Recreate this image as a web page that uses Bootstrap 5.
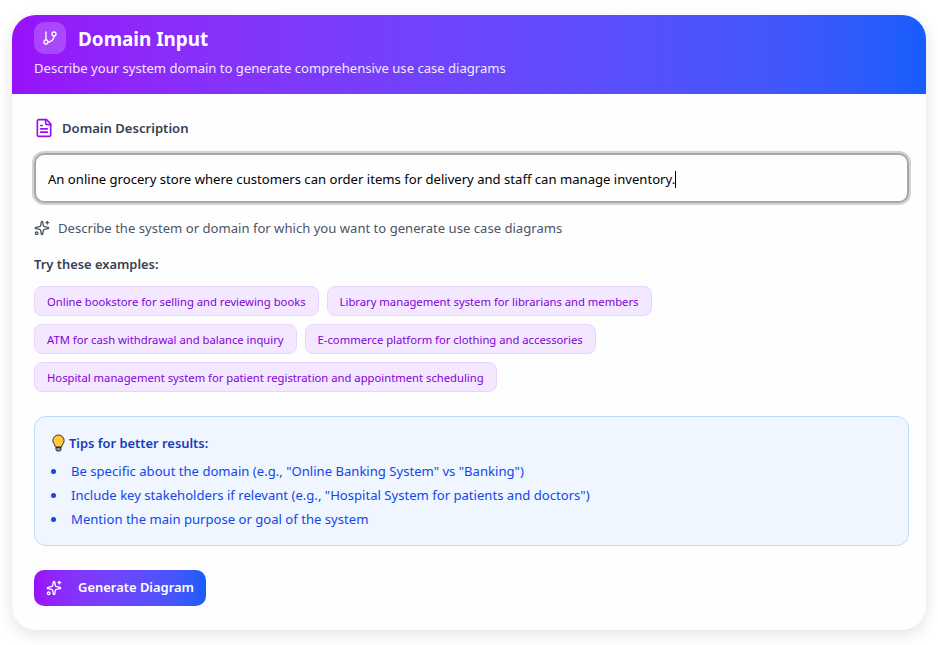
<!DOCTYPE html>
<html lang="en">
<head>
<meta charset="utf-8">
<title>Domain Input</title>
<link href="https://cdn.jsdelivr.net/npm/bootstrap@5.3.0/dist/css/bootstrap.min.css" rel="stylesheet">
<style>
html,body{height:100%}
body{background:#fff;font-family:"Noto Sans","Open Sans",sans-serif;overflow:hidden;padding:15px 12px}
.panel-main{border:0;border-radius:24px;overflow:hidden;box-shadow:0 4px 16px rgba(0,0,0,.12);height:615px;background:#fefeff}
.panel-head{background:linear-gradient(90deg in oklab,#9810fa,#155dfc);color:#fff;height:79px;padding:7px 22px 0;border-radius:0}
.head-icon{width:32px;height:32px;border-radius:10px;background:rgba(255,255,255,.2)}
.head-title{font-size:18.9px;font-weight:700;line-height:34px;margin:0}
.head-sub{font-size:13.08px;line-height:20px;margin:2px 0 0;color:#f3e8ff}
.panel-body{padding:0 17px 0 22px}
.label-row{height:20px;margin-top:24px;color:#364153;font-size:13.08px;font-weight:600}
.label-text{padding-top:2px}
.domain-box{height:50px;margin-top:15px;border:2px solid #a6a6a6;border-radius:10px;box-shadow:0 0 0 2px #d2d2d2;font-size:13.1px;color:#000;padding:3px 12px 0;display:flex;align-items:center;white-space:nowrap;background:transparent}
.caret-bar{display:inline-block;width:1px;height:17px;background:#000}
.hint-row{margin-top:15px;height:20px;color:#4a5565;font-size:13.1px}
.hint-text{padding-top:2px}
.try-title{margin-top:17px;height:18px;line-height:18px;color:#364153;font-size:12.9px;font-weight:600}
.chip-wrap{margin-top:13px;row-gap:8px;column-gap:8px}
.chip-btn{height:30px;border:1px solid #e9d4ff;border-radius:8px;background:#f3e8ff;color:#8200db;font-size:11.25px;padding:0 12px;line-height:29px}
.tips-box{margin-top:24px;height:130px;border:1px solid #bedbff;border-radius:12px;background:#eff6ff;padding:16px 16px 0}
.tips-title{font-size:12.9px;font-weight:600;color:#193cb8;line-height:20px;gap:3px}
.tips-list{margin:6px 0 0;padding:0;list-style:none;font-size:13.1px;color:#1447e6;line-height:24px}
.tips-list li{display:flex;align-items:center;gap:15px}
.tips-list li::before{content:"";width:5px;height:5px;border-radius:50%;background:#1447e6;flex:none}
.go-btn{margin-top:24px;height:36px;border:0;border-radius:10px;background:linear-gradient(90deg in oklab,#9810fa,#155dfc);color:#fff;font-size:12.95px;font-weight:600;padding:0 12px;gap:16px}
</style>
</head>
<body>
<div class="card panel-main">
  <div class="panel-head">
    <div class="d-flex align-items-start gap-2">
      <span class="head-icon d-flex align-items-center justify-content-center me-1">
        <svg width="16" height="16" viewBox="0 0 24 24" fill="none" stroke="#fff" stroke-width="2" stroke-linecap="round" stroke-linejoin="round"><line x1="6" y1="3" x2="6" y2="15"/><circle cx="18" cy="6" r="3"/><circle cx="6" cy="18" r="3"/><path d="M18 9a9 9 0 0 1-9 9"/></svg>
      </span>
      <h2 class="head-title">Domain Input</h2>
    </div>
    <p class="head-sub">Describe your system domain to generate comprehensive use case diagrams</p>
  </div>
  <div class="panel-body">
    <div class="label-row d-flex align-items-center gap-2">
      <svg width="20" height="20" viewBox="0 0 24 24" fill="none" stroke="#9810fa" stroke-width="2" stroke-linecap="round" stroke-linejoin="round"><path d="M15 2H6a2 2 0 0 0-2 2v16a2 2 0 0 0 2 2h12a2 2 0 0 0 2-2V7Z"/><path d="M14 2v4a2 2 0 0 0 2 2h4"/><path d="M10 9H8"/><path d="M16 13H8"/><path d="M16 17H8"/></svg>
      <span class="label-text">Domain Description</span>
    </div>
    <div class="domain-box">An online grocery store where customers can order items for delivery and staff can manage inventory.<span class="caret-bar"></span></div>
    <div class="hint-row d-flex align-items-center gap-2">
      <svg width="16" height="16" viewBox="0 0 24 24" fill="none" stroke="#4a5565" stroke-width="2" stroke-linecap="round" stroke-linejoin="round"><path d="M11.017 2.814a1 1 0 0 1 1.966 0l1.051 5.558a2 2 0 0 0 1.594 1.594l5.558 1.051a1 1 0 0 1 0 1.966l-5.558 1.051a2 2 0 0 0-1.594 1.594l-1.051 5.558a1 1 0 0 1-1.966 0l-1.051-5.558a2 2 0 0 0-1.594-1.594l-5.558-1.051a1 1 0 0 1 0-1.966l5.558-1.051a2 2 0 0 0 1.594-1.594z"/><path d="M20 2v4"/><path d="M22 4h-4"/><circle cx="4" cy="20" r="2"/></svg>
      <span class="hint-text">Describe the system or domain for which you want to generate use case diagrams</span>
    </div>
    <div class="try-title">Try these examples:</div>
    <div class="chip-wrap d-flex flex-wrap">
      <span class="chip-btn">Online bookstore for selling and reviewing books</span>
      <span class="chip-btn">Library management system for librarians and members</span>
      <span class="chip-btn">ATM for cash withdrawal and balance inquiry</span>
      <span class="chip-btn">E-commerce platform for clothing and accessories</span>
      <span class="chip-btn">Hospital management system for patient registration and appointment scheduling</span>
    </div>
    <div class="tips-box">
      <div class="tips-title d-flex align-items-center">
        <svg width="15" height="18" viewBox="0 0 15 18"><path d="M7.5 1a5.6 5.6 0 0 0-5.6 5.6c0 2.6 2 3.7 2.6 6.4h6c.6-2.7 2.600-3.800 2.600-6.400A5.600 5.600 0 0 0 7.500 1Z" fill="#ffc83d" stroke="#2a2a2a" stroke-width="1"/><path d="M5 13.500h5v2a1.500 1.500 0 0 1-1.500 1.500h-2A1.500 1.500 0 0 1 5 15.500Z" fill="#8a8f98" stroke="#2a2a2a" stroke-width="1"/></svg>
        <span>Tips for better results:</span>
      </div>
      <ul class="tips-list">
        <li>Be specific about the domain (e.g., "Online Banking System" vs "Banking")</li>
        <li>Include key stakeholders if relevant (e.g., "Hospital System for patients and doctors")</li>
        <li>Mention the main purpose or goal of the system</li>
      </ul>
    </div>
    <button class="go-btn btn d-inline-flex align-items-center" type="button">
      <svg width="16" height="16" viewBox="0 0 24 24" fill="none" stroke="#fff" stroke-width="2" stroke-linecap="round" stroke-linejoin="round"><path d="M11.017 2.814a1 1 0 0 1 1.966 0l1.051 5.558a2 2 0 0 0 1.594 1.594l5.558 1.051a1 1 0 0 1 0 1.966l-5.558 1.051a2 2 0 0 0-1.594 1.594l-1.051 5.558a1 1 0 0 1-1.966 0l-1.051-5.558a2 2 0 0 0-1.594-1.594l-5.558-1.051a1 1 0 0 1 0-1.966l5.558-1.051a2 2 0 0 0 1.594-1.594z"/><path d="M20 2v4"/><path d="M22 4h-4"/><circle cx="4" cy="20" r="2"/></svg>
      <span>Generate Diagram</span>
    </button>
  </div>
</div>
<script src="https://cdn.jsdelivr.net/npm/bootstrap@5.3.0/dist/js/bootstrap.bundle.min.js"></script>
</body>
</html>
